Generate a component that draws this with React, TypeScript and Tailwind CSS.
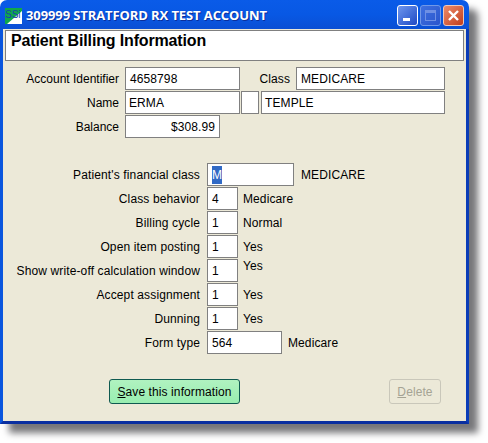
const FONT = "[font-family:'Liberation_Sans',Arial,sans-serif]";

function Box({ children, className = "" }: { children?: React.ReactNode; className?: string }) {
  return (
    <div className={`h-[23px] bg-white border border-[#808080] px-1 flex items-center text-[12px] tracking-[0.1px] text-black ${className}`}>
      {children}
    </div>
  );
}

function OptionRow({
  label,
  value,
  note,
  inputWidth = "w-[31px]",
  noteClass = "",
}: {
  label: string;
  value: React.ReactNode;
  note: string;
  inputWidth?: string;
  noteClass?: string;
}) {
  return (
    <div className="flex items-center h-[23px]">
      <div className="w-[197px] text-right text-[12px] tracking-[0.13px] text-black whitespace-nowrap">{label}</div>
      <Box className={`ml-[7px] border-[#7f9db9] ${inputWidth}`}>{value}</Box>
      <div className={`ml-[5px] text-[12px] tracking-[0.1px] text-black ${noteClass}`}>{note}</div>
    </div>
  );
}

function Logo() {
  return (
    <svg width="17" height="16" viewBox="0 0 17 16" className="shrink-0">
      <rect width="17" height="16" fill="#10a84a" />
      <polygon points="17,3 17,16 2,16" fill="#ffffff" />
      <text x="0" y="10" fontSize="10" fontFamily="Liberation Sans" fill="#1a3fb0">SSi</text>
    </svg>
  );
}

function TitleButtons() {
  return (
    <div className="flex gap-[2px] mr-[2px]">
      <div className="w-[21px] h-[21px] rounded-[3px] border border-white bg-gradient-to-br from-[#6f96ee] to-[#2048c4] flex items-end pl-[5px] pb-[4px]">
        <div className="w-[7px] h-[3px] bg-white" />
      </div>
      <div className="w-[21px] h-[21px] rounded-[3px] border border-[#7098e8] bg-gradient-to-br from-[#3f70e0] to-[#2a55cc] flex items-center justify-center">
        <div className="w-[11px] h-[11px] border border-[#6f90e4] border-t-[3px]" />
      </div>
      <div className="w-[21px] h-[21px] rounded-[3px] border border-[#f0c8b8] bg-gradient-to-br from-[#ec8a68] to-[#c23c18] flex items-center justify-center">
        <svg width="13" height="13" viewBox="0 0 13 13">
          <path d="M2 2 L11 11 M11 2 L2 11" stroke="#ffffff" strokeWidth="2.4" />
        </svg>
      </div>
    </div>
  );
}

export default function App() {
  return (
    <div className={`w-[488px] h-[443px] bg-white overflow-hidden ${FONT}`}>
      <div className="w-[469px] h-[424px] flex flex-col rounded-t-[7px] shadow-[9px_9px_7px_#77777a]">
        {/* Title bar */}
        <div className="h-[29px] shrink-0 rounded-t-[7px] bg-gradient-to-b from-[#0a5be8] via-[#0858e4] to-[#0a4fd4] flex items-center pl-[5px] pr-[3px] pt-[2px]">
          <Logo />
          <div className="ml-[4px] flex-1 text-white font-bold text-[13px] tracking-[-0.1px] whitespace-nowrap [font-family:'Open_Sans',sans-serif] [text-shadow:1px_1px_0_#0a2f9c]">
            309999 STRATFORD RX TEST ACCOUNT
          </div>
          <TitleButtons />
        </div>

        {/* Client area */}
        <div className="flex-1 bg-[#ece9d8] border-x-[3px] border-l-[#0a56de] border-r-[#0a3cb8] border-b-[3px] border-b-[#0a2fa0] pt-px">
          <div className="mx-[2px] h-[31px] bg-white border border-[#808080] pl-[5px] text-[16px] font-bold tracking-[-0.15px] leading-[19px] text-black">
            Patient Billing Information
          </div>

          <div className="mt-[6px] flex flex-col gap-px">
            <div className="flex items-center">
              <div className="w-[116px] text-right text-[12px] text-black">Account Identifier</div>
              <Box className="ml-[6px] w-[115px]">4658798</Box>
              <div className="w-[50px] text-right text-[12px] tracking-[0.1px] text-black">Class</div>
              <Box className="ml-[6px] w-[149px]">MEDICARE</Box>
            </div>
            <div className="flex items-center">
              <div className="w-[116px] text-right text-[12px] text-black">Name</div>
              <Box className="ml-[6px] w-[115px] !px-[3px]">ERMA</Box>
              <Box className="ml-px w-[18px]" />
              <Box className="ml-[2px] w-[184px] !px-[3px]">TEMPLE</Box>
            </div>
            <div className="flex items-center">
              <div className="w-[116px] text-right text-[12px] text-black">Balance</div>
              <Box className="ml-[6px] w-[95px] justify-end">$308.99</Box>
            </div>
          </div>

          <div className="mt-[25px] flex flex-col gap-px">
            <OptionRow
              label="Patient's financial class"
              value={<span className="bg-[#316ac5] text-white">M</span>}
              note="MEDICARE"
              inputWidth="w-[87px]"
              noteClass="ml-[7px]"
            />
            <OptionRow label="Class behavior" value="4" note="Medicare" />
            <OptionRow label="Billing cycle" value="1" note="Normal" />
            <OptionRow label="Open item posting" value="1" note="Yes" />
            <OptionRow label="Show write-off calculation window" value="1" note="Yes" noteClass="mb-[10px]" />
            <OptionRow label="Accept assignment" value="1" note="Yes" />
            <OptionRow label="Dunning" value="1" note="Yes" />
            <OptionRow label="Form type" value="564" note="Medicare" inputWidth="w-[75px]" noteClass="ml-[6px]" />
          </div>

          <div className="mt-[25px] ml-[106px] mr-[25px] flex justify-between">
            <button className="w-[131px] h-[25px] rounded-[3px] border border-[#0f5a50] bg-gradient-to-b from-[#b0f2c0] to-[#98edb0] text-[12px] tracking-[0.1px] text-black">
              <span className="underline">S</span>ave this information
            </button>
            <button className="w-[52px] h-[25px] rounded-[3px] border border-[#c9c7ba] bg-[#ece9d8] text-[12px] tracking-[0.1px] text-[#a5a394]">
              <span className="underline">D</span>elete
            </button>
          </div>
        </div>
      </div>
    </div>
  );
}
